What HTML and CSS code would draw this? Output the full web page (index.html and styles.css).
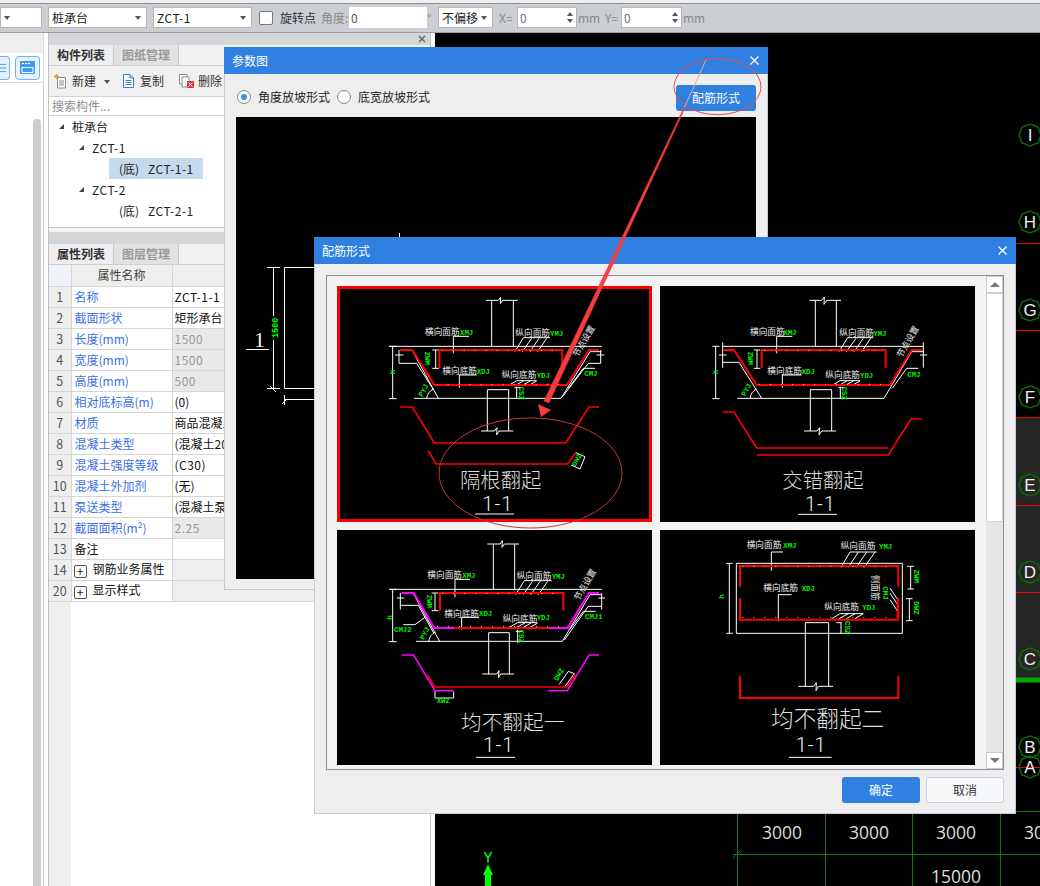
FILE: index.html
```html
<!DOCTYPE html>
<html lang="zh-CN">
<head>
<meta charset="utf-8">
<title>参数图</title>
<link rel="stylesheet" href="styles.css">
</head>
<body>
<div class="app">
  <div class="topline"></div>
  <div class="toolbar">
    <div class="select w42"><span class="caret"></span></div>
    <div class="select w99 ml6"><span>桩承台</span><span class="caret"></span></div>
    <div class="select w99 ml6"><span class="lat">ZCT-1</span><span class="caret"></span></div>
    <span class="checkbox"></span>
    <span class="tb-label w36 ml7">旋转点</span>
    <span class="tb-label muted w26 ml5">角度:</span>
    <div class="field w78 ml2">0</div>
    <span class="tb-label muted w11">°</span>
    <div class="select w55"><span>不偏移</span><span class="caret"></span></div>
    <span class="tb-label muted w18 ml6">X=</span>
    <div class="field w60 spin-field">0<span class="spin"><i class="up"></i><i class="down"></i></span></div>
    <span class="tb-label muted w27 ml1">mm</span>
    <span class="tb-label muted w16">Y=</span>
    <div class="field w61 spin-field">0<span class="spin"><i class="up"></i><i class="down"></i></span></div>
    <span class="tb-label muted ml1">mm</span>
  </div>
  <div class="workspace">
    <div class="leftcol">
      <div class="leftcol-head"></div>
      <div class="leftcol-icons">
        <span class="iconbtn cut"><svg width="10" height="14" viewBox="0 0 10 14"><path class="ic-blue" d="M0 3H7M0 7H7M0 11H7"/></svg></span>
        <span class="iconbtn"><svg width="16" height="14" viewBox="0 0 16 14"><rect class="ic-fill" x="0" y="0" width="15" height="13"/><path class="ic-white" d="M2 2.5H4M5 2.5H7M8 2.5H10M2 6.5H13V11.5H2Z"/></svg></span>
      </div>
      <div class="leftcol-body"><div class="vthumb"></div></div>
    </div>
    <div class="panel">
      <div class="panel-strip"><svg class="strip-x" width="8" height="8" viewBox="0 0 8 8"><path d="M1 1L7 7M7 1L1 7"/></svg></div>
      <div class="tabs">
        <span class="tab active">构件列表</span><span class="tab">图纸管理</span>
      </div>
      <div class="actions">
        <span class="action a-new"><svg width="14" height="15" viewBox="0 0 14 15"><path class="ic-doc" d="M3.5 3.5H11.5V14H3.5Z M5 7H10M5 9H10M5 11H10"/><path class="ic-spark" d="M0 2.5H5M2.5 0V5M1 1L4 4M4 1L1 4"/></svg>新建<i class="caret small"></i></span>
        <span class="action a-copy"><svg width="13" height="14" viewBox="0 0 13 14"><path class="ic-copy" d="M1.5 .5H8L11.5 4V13.5H1.5Z M8 .5V4H11.5 M3.5 6.5H9.5M3.5 8.5H9.5M3.5 10.5H9.5"/></svg>复制</span>
        <span class="action a-del"><svg width="15" height="14" viewBox="0 0 15 14"><path class="ic-doc" d="M.5 .5H8V10H.5Z"/><path class="ic-doc" d="M3 3H10V13H3Z"/><rect class="ic-red" x="8" y="7" width="7" height="7"/><path class="ic-white" d="M9.5 8.5L13.5 12.5M13.5 8.5L9.5 12.5"/></svg>删除</span>
      </div>
      <div class="search">搜索构件...</div>
      <ul class="tree">
        <li class="node n0"><i class="tri"></i>桩承台</li>
        <li class="node n1 lat"><i class="tri"></i>ZCT-1</li>
        <li class="node n2 lat selected"><span class="paren">(底)</span>ZCT-1-1</li>
        <li class="node n1 lat"><i class="tri"></i>ZCT-2</li>
        <li class="node n2 lat"><span class="paren">(底)</span>ZCT-2-1</li>
      </ul>
      <div class="panel-sep"></div>
      <div class="panel-strip"></div>
      <div class="tabs">
        <span class="tab active">属性列表</span><span class="tab">图层管理</span>
      </div>
      <table class="props">
        <colgroup><col class="c-no"><col class="c-name"><col class="c-val"></colgroup>
        <thead><tr><th class="corner"></th><th>属性名称</th><th></th></tr></thead>
        <tbody>
          <tr><td class="no">1</td><td class="nm">名称</td><td class="lat">ZCT-1-1</td></tr>
          <tr><td class="no">2</td><td class="nm">截面形状</td><td>矩形承台</td></tr>
          <tr><td class="no">3</td><td class="nm">长度(mm)</td><td class="dis lat">1500</td></tr>
          <tr><td class="no">4</td><td class="nm">宽度(mm)</td><td class="dis lat">1500</td></tr>
          <tr><td class="no">5</td><td class="nm">高度(mm)</td><td class="dis lat">500</td></tr>
          <tr><td class="no">6</td><td class="nm">相对底标高(m)</td><td>(0)</td></tr>
          <tr><td class="no">7</td><td class="nm">材质</td><td>商品混凝土</td></tr>
          <tr><td class="no">8</td><td class="nm">混凝土类型</td><td>(混凝土20石)</td></tr>
          <tr><td class="no">9</td><td class="nm">混凝土强度等级</td><td class="lat">(C30)</td></tr>
          <tr><td class="no">10</td><td class="nm">混凝土外加剂</td><td>(无)</td></tr>
          <tr><td class="no">11</td><td class="nm">泵送类型</td><td>(混凝土泵)</td></tr>
          <tr><td class="no">12</td><td class="nm">截面面积(m²)</td><td class="dis lat">2.25</td></tr>
          <tr><td class="no">13</td><td class="nm plain">备注</td><td></td></tr>
          <tr><td class="no">14</td><td><span class="plus">+</span>钢筋业务属性</td><td class="grp"></td></tr>
          <tr><td class="no">20</td><td><span class="plus">+</span>显示样式</td><td class="grp"></td></tr>
        </tbody>
      </table>
      <div class="filler"><div class="gutter"></div></div>
    </div>
    <div class="cad">
      <svg class="cad-svg" viewBox="435 33 605 853">
        <rect class="band" x="1000" y="417" width="40" height="261"/>
        <path class="cad-red" d="M1000 243.500H1040M1000 330.500H1040M1000 417.500H1040M1000 505.500H1040M1000 592.500H1040M1000 767.500H1040"/>
        <path class="cad-band" d="M1000 680H1040"/>
        <g class="hex">
          <path d="M1030 124L1038 127L1041 135L1038 143L1030 146L1022 143L1019 135L1022 127Z"/>
          <path d="M1030 211L1038 214L1041 222L1038 230L1030 233L1022 230L1019 222L1022 214Z"/>
          <path d="M1030 299L1038 302L1041 310L1038 318L1030 321L1022 318L1019 310L1022 302Z"/>
          <path d="M1030 386L1038 389L1041 397L1038 405L1030 408L1022 405L1019 397L1022 389Z"/>
          <path d="M1030 474L1038 477L1041 485L1038 493L1030 496L1022 493L1019 485L1022 477Z"/>
          <path d="M1030 561L1038 564L1041 572L1038 580L1030 583L1022 580L1019 572L1022 564Z"/>
          <path d="M1030 648L1038 651L1041 659L1038 667L1030 670L1022 667L1019 659L1022 651Z"/>
          <path d="M1030 736L1038 739L1041 747L1038 755L1030 758L1022 755L1019 747L1022 739Z"/>
          <path d="M1030 756L1038 759L1041 767L1038 775L1030 778L1022 775L1019 767L1022 759Z"/>
        </g>
        <g class="axis">
          <text x="1030" y="141">I</text><text x="1030" y="228">H</text><text x="1030" y="316">G</text>
          <text x="1030" y="403">F</text><text x="1030" y="491">E</text><text x="1030" y="578">D</text>
          <text x="1030" y="665">C</text><text x="1030" y="753">B</text><text x="1030" y="773">A</text>
        </g>
        <path class="grid" d="M1016 811.500H1040M733 854.500H1040M737.500 810V886M825.500 810V886M912.500 810V886M1000.500 810V886M733 858L741 850"/>
        <g class="dimtext">
          <text x="782" y="839">3000</text><text x="869" y="839">3000</text><text x="956" y="839">3000</text><text x="1044" y="839">3000</text>
          <text x="956" y="883">15000</text>
        </g>
        <path class="ylabel" d="M484.500 852L488 858V863M491.500 852L488 858"/>
        <path class="yarrow" d="M488 864L493 875H491V886H485V875H483Z"/>
      </svg>
    </div>
  </div>

  <section class="dialog d1">
    <header class="dlg-title"><span>参数图</span><svg class="dlg-x" width="9" height="9" viewBox="0 0 9 9"><path d="M.5 .5L8.500 8.500M8.500 .5L.5 8.500"/></svg></header>
    <div class="d1-row">
      <span class="radio on"></span><span class="radio-label">角度放坡形式</span>
      <span class="radio second"></span><span class="radio-label">底宽放坡形式</span>
      <span class="btn primary push">配筋形式</span>
    </div>
    <div class="d1-canvas">
      <svg class="fit" viewBox="236 117 520 462">
        <path class="p-w" d="M399.500 233V240M284.500 267.500H330V388.500H284.500ZM273.500 267V316M273.500 340V388M267 267.500H280M267 388.500H280M270 386L276 392M284.500 395V405M282 404L287 399M284.500 399.500H330M246 349.500H269"/>
        <text class="p-green" transform="translate(277.500 338) rotate(-90)">1500</text>
        <text class="p-one" x="254" y="347">1</text>
      </svg>
    </div>
  </section>

  <section class="dialog d2">
    <header class="dlg-title"><span>配筋形式</span><svg class="dlg-x" width="9" height="9" viewBox="0 0 9 9"><path d="M.5 .5L8.500 8.500M8.500 .5L.5 8.500"/></svg></header>
    <div class="frame">
      <div class="cards">
        <!-- card 1 -->
        <div class="card selected">
          <svg class="fit" viewBox="6 3 945 708">
            <path class="w" d="M470 184V46M535 184V46M453 46H490L497 36L496 56L503 46H548M163 184H800M237 340H678L765 200H800M232 197L310 340M173 184V341M162 184H185M162 341H185M192 195V235H245L296 315M180 210H205M797 195V235M785 210H808M745 250H780M745 250L700 310M680 338L760 235H797M302 195V250M292 195H312M292 250H312M402 154H355V205M645 158H565L540 200M590 160L562 200M612 160L585 200M635 160L608 200M425 270H373V308M605 287H545L520 302M565 288L540 302M585 288L560 302M605 288L580 302M545 305V342M538 308H560M457 438V314H521V438M438 438H478L486 428L485 450L492 438H535M275 340Q278 320 296 312M722 503L750 515L735 552L708 540M420 687H537"/>
            <path class="r" d="M313 250V195H682V250M195 195H232L298 300H695L762 195H792"/>
            <path class="y" d="M320 197H675M305 298H690"/>
            <path class="r2" d="M195 366H232L298 474H692L762 366H792M280 497L303 537H698L722 503"/>
            <path class="md" d="M708 285L730 250"/>
            <text class="lw" x="270" y="150">横向面筋</text><text class="lg" x="375" y="150">XMJ</text>
            <text class="lw" x="541" y="152">纵向面筋</text><text class="lg" x="645" y="154">YMJ</text>
            <text class="lw" x="322" y="266">横向底筋</text><text class="lg" x="425" y="268">XDJ</text>
            <text class="lw" x="500" y="279">纵向底筋</text><text class="lg" x="605" y="279">YDJ</text>
            <text class="lg" x="748" y="274">CMJ</text>
            <text class="lg" transform="translate(552 305) rotate(90)">CSZ</text>
            <text class="lg" transform="translate(270 200) rotate(90)">ZWM</text>
            <text class="lg" transform="translate(180 268) rotate(-90)">h</text>
            <text class="lg" transform="translate(262 337) rotate(-62)">PYJ</text>
            <text class="lg" transform="translate(722 545) rotate(-60)">DWZ</text>
            <text class="lw" transform="translate(728 218) rotate(-60)">节点设置</text>
            <text class="title" x="375" y="610">隔根翻起</text>
            <text class="sec" x="442" y="678">1-1</text>
          </svg>
        </div>
        <!-- card 2 -->
        <div class="card">
          <svg class="fit" viewBox="15 3 945 708">
            <path class="w" d="M481 184V46M544 184V46M463 46H500L508 36L507 58L515 46H558M203 184H805M203 172V248M805 172V248M182 184V341M172 184H194M172 341H194M203 232H252L320 340M247 340H687L770 200H805M192 210H215M795 210H817M755 250H790M755 250L712 310M306 195V250M296 195H316M296 250H316M412 154H365V205M655 158H578L552 200M603 160L574 200M625 160L597 200M647 160L620 200M440 270H382V308M615 287H555L530 302M575 288L550 302M595 288L570 302M615 288L590 302M556 305V342M550 308H570M466 438V314H530V438M447 438H486L494 428L492 450L500 438H543M285 340Q288 320 305 312M430 688H546"/>
            <path class="r" d="M320 248V195H692V248M205 195H237L305 300H705L770 195H803"/>
            <path class="y" d="M328 197H685M312 298H700"/>
            <path class="r2" d="M204 381H237L305 489H698M306 510H700L768 402H800"/>
            <path class="md" d="M705 290L738 235"/>
            <text class="lw" x="285" y="150">横向面筋</text><text class="lg" x="385" y="150">XMJ</text>
            <text class="lw" x="553" y="152">纵向面筋</text><text class="lg" x="655" y="154">YMJ</text>
            <text class="lw" x="337" y="266">横向底筋</text><text class="lg" x="440" y="268">XDJ</text>
            <text class="lw" x="511" y="279">纵向底筋</text><text class="lg" x="615" y="279">YDJ</text>
            <text class="lg" x="757" y="276">CMJ</text>
            <text class="lg" transform="translate(560 305) rotate(90)">CSZ</text>
            <text class="lg" transform="translate(280 200) rotate(90)">ZWM</text>
            <text class="lg" transform="translate(188 268) rotate(-90)">h</text>
            <text class="lg" transform="translate(271 335) rotate(-62)">PYJ</text>
            <text class="lw" transform="translate(740 220) rotate(-60)">节点设置</text>
            <text class="title" x="382" y="610">交错翻起</text>
            <text class="sec" x="450" y="678">1-1</text>
          </svg>
        </div>
        <!-- card 3 -->
        <div class="card">
          <svg class="fit" viewBox="6 6 945 705">
            <path class="w" d="M475 184V49M539 184V49M457 48H495L502 38L501 58L508 48H552M165 184H800M243 340H682L765 200H800M235 197L314 340M173 184V341M162 184H185M162 341H185M196 195V245M196 232H250L296 315M186 210H208M800 195V245M790 210H810M745 250H782M745 250L706 302M688 336L760 235H800M205 290H240L270 268M300 195V248M290 195H310M290 248H310M405 154H360V208M650 158H568L542 200M592 160L565 200M615 160L588 200M638 160L610 200M432 268H380V305M605 284H548L522 298M570 285L545 298M588 285L565 298M608 285L585 298M548 305V345M542 310H562M461 438V314H523V438M442 438H485L492 428L490 450L497 438H537M281 340Q284 320 302 312M300 490V510H356V490M672 470L700 430L718 437L690 475M423 688H540"/>
            <path class="r" d="M315 248V195H685V248M298 300H698L738 235"/>
            <path class="m" d="M200 195H236L298 300H356M640 300H698L762 195H792"/>
            <path class="y" d="M322 197H680M306 296H690"/>
            <path class="r2" d="M276 440L300 477H695L720 440"/>
            <path class="m2" d="M201 381H236L300 488H356M640 488H697L762 381H792"/>
            <text class="lw" x="277" y="150">横向面筋</text><text class="lg" x="382" y="150">XMJ</text>
            <text class="lw" x="545" y="152">纵向面筋</text><text class="lg" x="650" y="152">YMJ</text>
            <text class="lw" x="328" y="266">横向底筋</text><text class="lg" x="432" y="264">XDJ</text>
            <text class="lw" x="503" y="282">纵向底筋</text><text class="lg" x="605" y="276">YDJ</text>
            <text class="lg" x="177" y="311">CMJ2</text><text class="lg" x="750" y="274">CMJ1</text>
            <text class="lg" x="305" y="526">XWZ</text>
            <text class="lg" transform="translate(553 305) rotate(90)">CSZ</text>
            <text class="lg" transform="translate(275 200) rotate(90)">ZWM</text>
            <text class="lg" transform="translate(172 275) rotate(-90)">h</text>
            <text class="lg" transform="translate(266 337) rotate(-62)">PYJ</text>
            <text class="lg" transform="translate(668 460) rotate(-60)">DWZ</text>
            <text class="lw" transform="translate(732 220) rotate(-60)">节点设置</text>
            <text class="title t62" x="378" y="605">均不翻起一</text>
            <text class="sec" x="445" y="672">1-1</text>
          </svg>
        </div>
        <!-- card 4 -->
        <div class="card">
          <svg class="fit" viewBox="15 6 945 705">
            <path class="w" d="M244 106H742V316H244ZM223 106V316M214 106H233M214 316H233M384 72H349V128M665 72H585L558 118M610 72L580 118M635 72L604 118M660 72L628 118M410 200H370V280M625 257H555L530 272M580 257L552 272M600 257L574 272M625 257L600 272M451 475V284H521V475M430 475H476L484 464L483 488L490 475H534M558 284V318M544 284H560M767 115V183M757 115H777M757 183H777M763 212V278M753 212H773M753 278H773M705 180L728 215M705 195L728 230M705 215L728 250M402 688H530"/>
            <path class="r" d="M255 176V114H730V176M255 210V275H730V210M728 212V270"/>
            <path class="y" d="M262 116H725M262 268H722"/>
            <path class="r" d="M255 445V510H730V445"/>
            <text class="lw" x="275" y="60">横向面筋</text><text class="lg" x="385" y="60">XMJ</text>
            <text class="lw" x="557" y="62">纵向面筋</text><text class="lg" x="672" y="62">YMJ</text>
            <text class="lw" x="325" y="188">横向底筋</text><text class="lg" x="440" y="188">XDJ</text>
            <text class="lw" x="508" y="245">纵向底筋</text><text class="lg" x="622" y="245">YDJ</text>
            <text class="lg" transform="translate(570 279) rotate(90)">CSZ</text>
            <text class="lg" transform="translate(778 125) rotate(90)">ZWM</text>
            <text class="lg" transform="translate(776 220) rotate(90)">DWZ</text>
            <text class="lg" transform="translate(683 175) rotate(90)">CMJ</text>
            <text class="lg" transform="translate(206 212) rotate(-90)">h</text>
            <text class="lw" transform="translate(652 140) rotate(90)">侧面筋</text>
            <text class="title t68" x="348" y="597">均不翻起二</text>
            <text class="sec" x="422" y="672">1-1</text>
          </svg>
        </div>
      </div>
      <div class="vscroll">
        <span class="sb-btn"><i class="sb-up"></i></span>
        <span class="sb-thumb"></span>
        <span class="sb-track"></span>
        <span class="sb-btn"><i class="sb-down"></i></span>
      </div>
    </div>
    <footer class="d2-foot">
      <span class="btn primary wide">确定</span>
      <span class="btn ghost wide">取消</span>
    </footer>
  </section>

  <svg class="markup" viewBox="0 0 1040 886">
    <ellipse class="ring" cx="717.500" cy="86.700" rx="43.500" ry="28"/>
    <ellipse class="ring dark" cx="530.500" cy="473" rx="91.500" ry="55"/>
    <path class="arrow-faint" d="M706 60L684 108"/>
    <path class="arrow-shaft" d="M684 107.500L685 108L549 403L544 401Z"/>
    <path class="arrow-head" d="M541 417L538 404L551 410Z"/>
  </svg>
</div>
</body>
</html>
```
FILE: styles.css
```css
* { box-sizing: border-box; }
html, body { margin: 0; padding: 0; }
body {
  width: 1040px; height: 886px; overflow: hidden; background: #fff; color: #222;
  font: 12px/16px "Noto Sans CJK SC", "Noto Sans", sans-serif;
}
.app { position: relative; width: 1040px; height: 886px; display: flex; flex-direction: column; overflow: hidden; }
.lat { letter-spacing: .5px; }
.topline { height: 4px; background: #f0f0f0; border-bottom: 1px solid #8c8f94; flex: none; }
.toolbar {
  height: 29px; flex: none; background: #cbced3; border-bottom: 1px solid #9a9da2;
  display: flex; align-items: center; padding-bottom: 1px; white-space: nowrap;
}
.select, .field {
  height: 21px; background: #fff; display: flex; align-items: center; justify-content: space-between;
  padding: 0 4px 0 3px; flex: none; color: #222;
}
.select { border: 1px solid #b5b5b5; }
.field { color: #555; padding: 0 2px; }
.spin-field { border: 1px solid #b5b5b5; color: #777; }
.caret { width: 0; height: 0; border: 3px solid transparent; border-top: 4px solid #555; border-bottom: 0; flex: none; margin-right: 1px; }
.caret.small { display: inline-block; margin: 2px 0 0 4px; }
.w42 { width: 42px; } .w99 { width: 99px; } .w78 { width: 78px; } .w55 { width: 55px; }
.w60 { width: 60px; } .w61 { width: 61px; } .w36 { width: 36px; } .w26 { width: 26px; }
.w18 { width: 18px; } .w27 { width: 27px; } .w16 { width: 16px; } .w11 { width: 11px; }
.ml1 { margin-left: 1px; } .ml2 { margin-left: 2px; } .ml5 { margin-left: 5px; } .ml6 { margin-left: 6px; } .ml7 { margin-left: 7px; }
.checkbox { width: 14px; height: 14px; margin-left: 7px; background: #fff; border: 1px solid #777; border-radius: 2px; flex: none; }
.tb-label { flex: none; color: #333; }
.tb-label.muted { color: #8a8a8a; }
.spin { display: flex; flex-direction: column; gap: 3px; }
.spin i { display: block; width: 0; height: 0; border: 3px solid transparent; margin-right: 1px; }
.spin .up { border-top: 0; border-bottom: 4px solid #555; }
.spin .down { border-bottom: 0; border-top: 4px solid #555; }

.workspace { flex: 1; display: flex; min-height: 0; }
.leftcol { width: 48px; flex: none; display: flex; flex-direction: column; }
.leftcol-head { height: 20px; background: #eee; border-right: 1px solid #ddd; width: 44px; }
.leftcol-icons { height: 30px; width: 44px; display: flex; gap: 5px; align-items: center; background: #fff; border-bottom: 1px solid #ddd; border-right: 1px solid #ddd; overflow: hidden; }
.iconbtn { width: 25px; height: 24px; flex: none; background: #e5f1fd; border: 1px solid #6fb3f5; border-radius: 4px; display: flex; align-items: center; justify-content: center; }
.iconbtn.cut { width: 10px; border-left: 0; border-radius: 0 4px 4px 0; }
.ic-blue { stroke: #3f9bf0; fill: none; stroke-width: 1; }
.ic-fill { fill: #3f9bf0; }
.ic-white { stroke: #fff; fill: none; stroke-width: 1; }
.leftcol-body { flex: 1; width: 44px; padding: 36px 0 0 33px; border-right: 1px solid #c4c4c4; }
.vthumb { width: 8px; height: 100%; background: #ccc; border-radius: 4px 4px 0 0; }

.panel { width: 383px; flex: none; display: flex; flex-direction: column; border-left: 1px solid #c4c4c4; border-right: 1px solid #c4c4c4; }
.panel-strip { height: 12px; flex: none; background: #d4d6da; display: flex; justify-content: flex-end; align-items: center; padding-right: 4px; }
.strip-x { stroke: #666; stroke-width: 1.5; fill: none; }
.tabs { height: 21px; flex: none; display: flex; background: #f0f0f0; border-bottom: 1px solid #d0d0d0; }
.tab { width: 65px; background: #e2e2e2; color: #999; text-align: center; font-weight: 700; line-height: 20px; border-right: 1px solid #c9c9c9; }
.tab.active { background: #eee; color: #333; }
.actions { height: 31px; flex: none; background: #f0f0f0; border-bottom: 1px solid #d4d4d4; display: flex; align-items: center; padding-left: 5px; color: #333; }
.action { display: flex; align-items: center; gap: 4px; }
.a-copy { margin-left: 12px; } .a-del { margin-left: 15px; }
.a-copy svg { margin-right: 1px; }
.ic-doc { stroke: #8c8c8c; fill: #fff; stroke-width: 1; }
.ic-spark { stroke: #f0a020; fill: none; stroke-width: 1; }
.ic-copy { stroke: #3f7fc8; fill: #fff; stroke-width: 1; }
.ic-red { fill: #d9363e; }
.search { height: 19px; flex: none; color: #8f8f8f; padding-left: 3px; line-height: 18px; border-bottom: 1px solid #d4d4d4; background: #fff; }
.tree { list-style: none; margin: 0; padding: 0; height: 112px; flex: none; border-bottom: 1px solid #c8c8c8; background: #fff; color: #222; }
.node { height: 21px; line-height: 19px; padding-bottom: 1px; display: flex; align-items: center; }
.n0 { padding-left: 10px; } .n1 { padding-left: 30px; } .n2 { margin-left: 60px; padding-left: 10px; width: 94px; }
.tri { width: 0; height: 0; margin-right: 8px; border-style: solid; border-width: 0 0 5px 5px; border-color: transparent transparent #444 transparent; flex: none; }
.n2.selected { background: #c7d8ef; }
.paren { width: 29px; flex: none; letter-spacing: 0; }
.panel-sep { height: 4px; flex: none; background: #f4f4f4; }
.props { width: 381px; table-layout: fixed; border-collapse: collapse; flex: none; background: #fff; }
.c-no { width: 22px; } .c-name { width: 101px; }
.props th, .props td { height: 21px; padding: 0 2px; border-right: 1px solid #d6d6d6; border-bottom: 1px solid #d6d6d6; font-weight: 400; white-space: nowrap; overflow: hidden; line-height: 16px; }
.props th { background: #eee; color: #444; text-align: center; }
.props th.corner { background: #eef2f8; }
.props td { color: #111; }
.props .no { background: #eee; color: #555; text-align: center; padding: 0; font-size: 12.500px; }
.props .nm { color: #3d6fe4; padding-left: 3px; }
.props .nm.plain { color: #111; }
.props .dis { background: #e9e9e9; color: #999; }
.props .grp { background: #eee; }
.plus { display: inline-block; width: 13px; height: 13px; line-height: 10px; margin: 0 6px 0 0; text-align: center; border: 1px solid #555; border-radius: 2px; vertical-align: -2px; }
.filler { flex: 1; background: #fff; }
.gutter { width: 22px; height: 100%; background: #eee; }

.cad { flex: 1; background: #000; margin-left: 4px; min-width: 0; }
.cad-svg { display: block; width: 605px; height: 853px; }
.band { fill: #262626; }
.cad-red { stroke: #e00; stroke-width: 1; fill: none; }
.cad-band { stroke: #0a0; stroke-width: 5; }
.hex path { fill: none; stroke: #0a6a0a; stroke-width: 1.500; }
.axis text { fill: #eee; font: 17px "Liberation Sans", sans-serif; text-anchor: middle; }
.grid { stroke: #0a7a0a; stroke-width: 1; fill: none; }
.dimtext text { fill: #ddd; font: 17.500px "Open Sans", sans-serif; text-anchor: middle; }
.ylabel { stroke: #0f0; fill: none; stroke-width: 1.500; }
.yarrow { fill: #0f0; }

.dialog { position: absolute; display: flex; flex-direction: column; background: #eee; border: 1px solid #c3cbdb; border-top: 0; }
.d1 { left: 224px; top: 47px; width: 544px; height: 543px; }
.d2 { left: 314px; top: 237px; width: 702px; height: 577px; }
.dlg-title { height: 27px; flex: none; margin: 0 -1px; background: #2f80e0; color: #fff; display: flex; align-items: center; justify-content: space-between; padding: 0 9px 0 8px; }
.dlg-x { stroke: #fff; stroke-width: 1.300; fill: none; }
.d1-row { height: 43px; flex: none; display: flex; align-items: center; padding: 10px 11px 7px 12px; }
.radio { width: 14px; height: 14px; border: 1px solid #888; border-radius: 50%; background: #fff; flex: none; position: relative; }
.radio.on::after { content: ""; position: absolute; left: 3px; top: 3px; width: 6px; height: 6px; border-radius: 50%; background: #3a8ef0; }
.radio.second { margin-left: 7px; }
.radio-label { margin-left: 7px; color: #222; }
.btn { height: 26px; display: flex; align-items: center; justify-content: center; border-radius: 3px; flex: none; }
.btn.primary { width: 80px; background: #2f80e0; color: #fff; }
.btn.push { margin: 2px 0 0 auto; }
.btn.ghost { background: #f7f8fa; border: 1px solid #c8d0de; color: #333; }
.btn.wide { width: 78px; }
.d1-canvas { margin-left: 11px; width: 520px; height: 462px; background: #000; flex: none; }
.fit { display: block; width: 100%; height: 100%; }
.p-w { stroke: #fff; fill: none; stroke-width: 1; }
.p-green { fill: #0f0; font: 700 8.500px "Liberation Mono", monospace; }
.p-one { fill: #eee; font: 22px "Liberation Serif", serif; }

.frame { margin: 11px 11px 0 11px; height: 495px; width: 678px; flex: none; background: #f3f3f3; border: 1px solid #8d8d9c; display: flex; justify-content: space-between; }
.cards { display: grid; grid-template-columns: 315px 315px; grid-template-rows: 236px 235px; gap: 8px; padding: 10px 0 0 10px; }
.card { background: #000; min-width: 0; }
.card.selected { outline: 3px solid #f00; outline-offset: -3px; }
.w { stroke: #fff; stroke-width: 3; fill: none; }
.r { stroke: #f00; stroke-width: 6; fill: none; }
.r2 { stroke: #f00; stroke-width: 5; fill: none; }
.m { stroke: #f0f; stroke-width: 6; fill: none; }
.m2 { stroke: #f0f; stroke-width: 4.500; fill: none; }
.md { stroke: #f0f; stroke-width: 3; fill: none; stroke-dasharray: 3 12; }
.y { stroke: #ff0; stroke-width: 3; fill: none; stroke-dasharray: 3 30; }
.lw { fill: #eee; font: 26px "Noto Sans CJK SC", sans-serif; }
.lg { fill: #0e0; font: 700 22px "Liberation Mono", monospace; }
.title { fill: #ddd; font: 300 61px "Noto Sans CJK SC", sans-serif; }
.title.t62 { font-size: 62px; }
.title.t68 { font-size: 68px; }
.sec { fill: #eee; font: 300 60px "Roboto", sans-serif; letter-spacing: 3px; }
.vscroll { width: 17px; display: flex; flex-direction: column; background: #e6e6e6; }
.sb-btn { height: 17px; flex: none; background: #fff; border: 1px solid #c9c9c9; display: flex; align-items: center; justify-content: center; }
.sb-up { width: 0; height: 0; border: 5px solid transparent; border-top: 0; border-bottom: 5px solid #777; }
.sb-down { width: 0; height: 0; border: 5px solid transparent; border-bottom: 0; border-top: 5px solid #777; }
.sb-thumb { height: 229px; flex: none; background: #fff; border: 1px solid #d4d4d4; }
.sb-track { flex: 1; }
.d2-foot { display: flex; justify-content: flex-end; gap: 6px; padding: 7px 11px 0 0; }

.markup { position: absolute; left: 0; top: 0; width: 1040px; height: 886px; pointer-events: none; }
.ring { fill: none; stroke: #ee4a52; stroke-width: 1; }
.ring.dark { stroke: #c8383c; }
.arrow-faint { stroke: #f4a0a8; stroke-width: 1; fill: none; }
.arrow-shaft { fill: #f63c3c; stroke: #f63c3c; stroke-width: .5; }
.arrow-head { fill: #f63c3c; }
```
